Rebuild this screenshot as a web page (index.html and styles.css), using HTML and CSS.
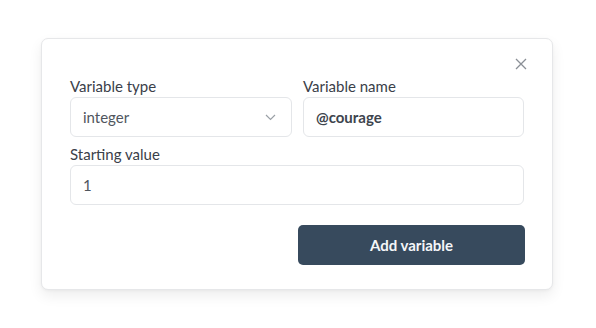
FILE: index.html
```html
<!DOCTYPE html>
<html>
<head>
<meta charset="utf-8">
<link rel="stylesheet" href="styles.css">
</head>
<body>
<div class="card">
  <div class="header">
    <button class="close" aria-label="Close">
      <svg width="12" height="12" viewBox="0 0 12 12"><path d="M1 1L11 11M11 1L1 11" stroke="#8a8f96" stroke-width="1.3" fill="none"/></svg>
    </button>
  </div>
  <div class="grid">
    <div class="field">
      <label class="label">Variable type</label>
      <div class="input select">
        <span class="value">integer</span>
        <svg class="chev" width="11" height="7" viewBox="0 0 11 7"><path d="M1 1L5.5 5.5L10 1" stroke="#9aa0a6" stroke-width="1.2" fill="none"/></svg>
      </div>
    </div>
    <div class="field">
      <label class="label">Variable name</label>
      <div class="input"><span class="value bold">@courage</span></div>
    </div>
    <div class="field full">
      <label class="label">Starting value</label>
      <div class="input"><span class="value">1</span></div>
    </div>
  </div>
  <div class="actions">
    <button class="primary">Add variable</button>
  </div>
</div>
</body>
</html>
```
FILE: styles.css
```css
* { box-sizing: border-box; }
html, body { margin: 0; padding: 0; background: #ffffff; }
body {
  font-family: "Lato", "Noto Sans", sans-serif;
  padding: 38px 0 0 41px;
  width: 596px;
  height: 328px;
  overflow: hidden;
}
.card {
  width: 512px;
  height: 252px;
  border: 1px solid #e6e7e9;
  border-radius: 7px;
  background: #fff;
  box-shadow: 0 6px 14px rgba(0,0,0,0.07), 0 1px 3px rgba(0,0,0,0.04);
  padding: 15px 27px 24px 28px;
}
.header {
  display: flex;
  justify-content: flex-end;
  height: 22px;
}
.close {
  width: 20px;
  height: 20px;
  border: 0;
  background: transparent;
  padding: 0;
  display: flex;
  align-items: center;
  justify-content: center;
  margin-right: -6px;
}
.grid {
  display: grid;
  grid-template-columns: 222px 221px;
  column-gap: 11px;
  row-gap: 7px;
}
.field { display: flex; flex-direction: column; }
.field.full { grid-column: 1 / 3; }
.label {
  font-size: 15px;
  line-height: 20px;
  color: #3a4049;
  margin-bottom: 1px;
}
.input {
  height: 40px;
  border: 1px solid #e4e6e9;
  border-radius: 6px;
  display: flex;
  align-items: center;
  padding: 0 12px;
}
.select { justify-content: space-between; padding-right: 15px; }
.value {
  font-size: 15px;
  color: #50565e;
}
.value.bold { font-weight: 700; color: #3d444d; }
.actions {
  display: flex;
  justify-content: flex-end;
  margin-top: 20px;
}
.primary {
  width: 227px;
  height: 40px;
  border: 0;
  border-radius: 5px;
  background: #374a5d;
  color: #f4f6f8;
  font-family: "Lato", "Noto Sans", sans-serif;
  font-weight: 700;
  font-size: 15px;
}
```
